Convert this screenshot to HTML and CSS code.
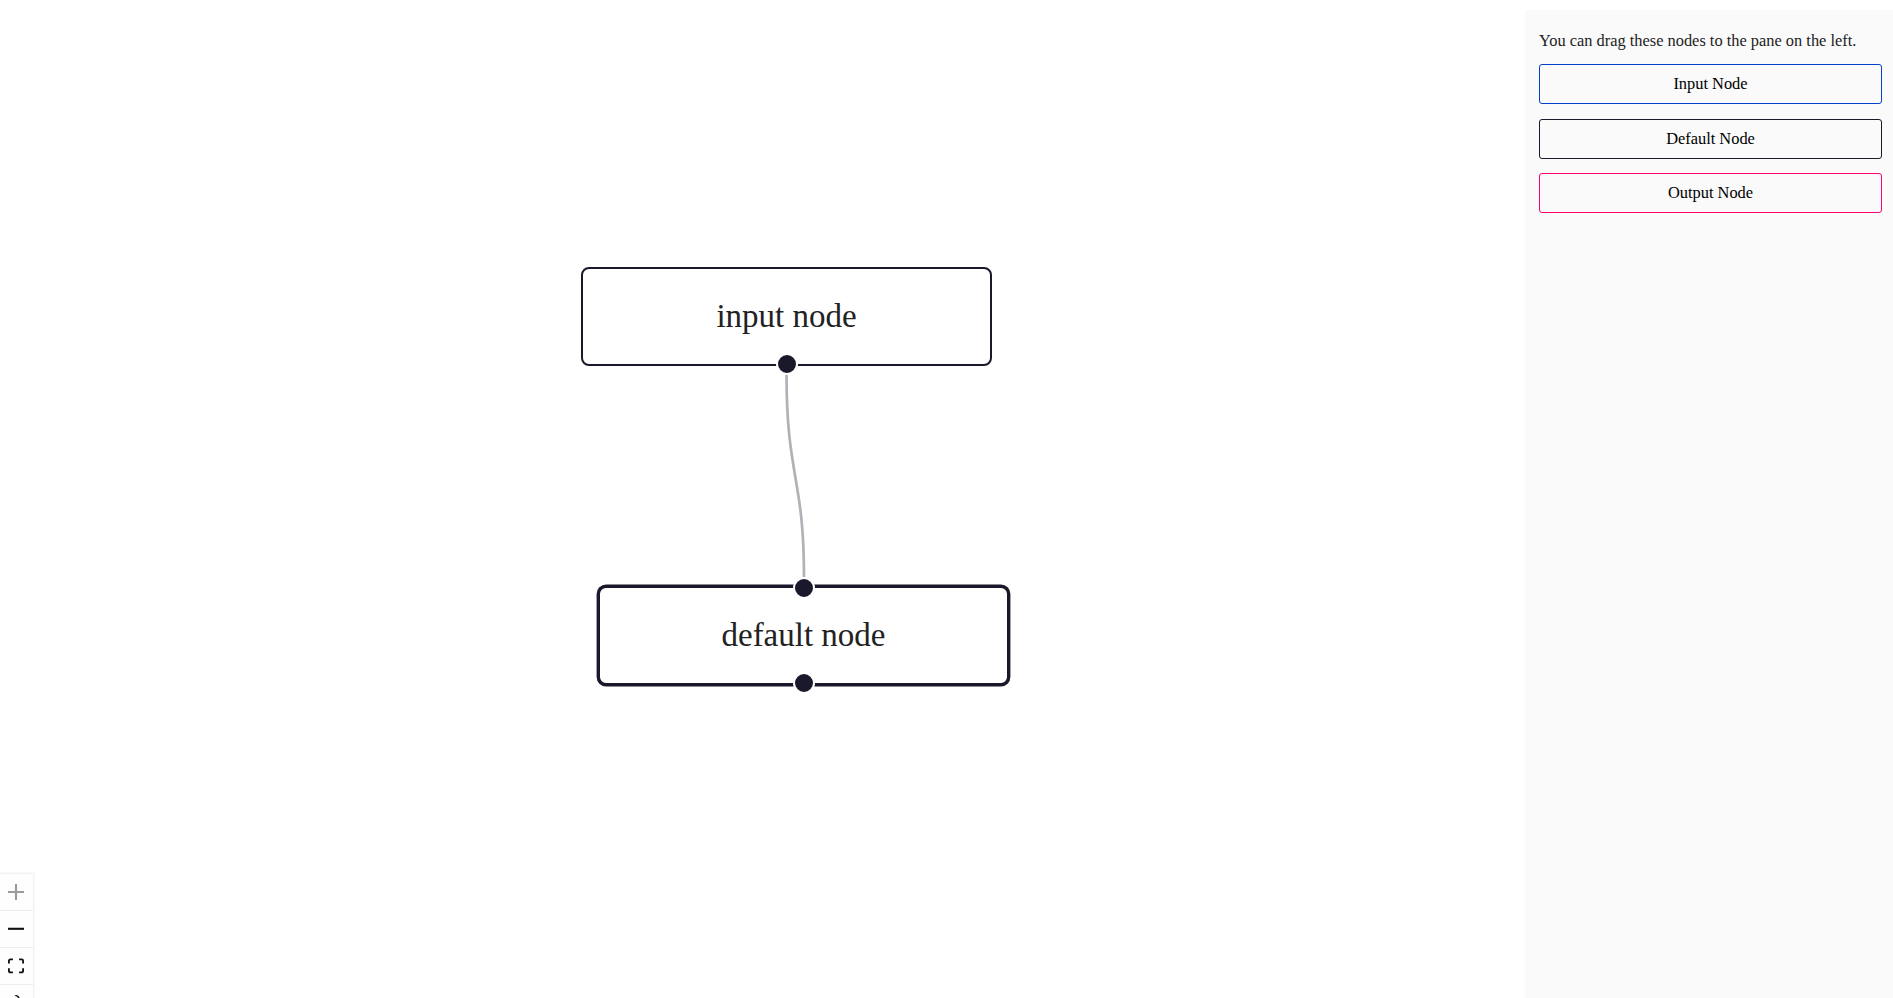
FILE: index.html
```html
<!DOCTYPE html>
<html>
<head>
    <title>Drag and Drop</title>
    <link rel="stylesheet" href="styles.css">
</head>
<body>
    <div class="dndflow">
        <div class="flow-pane">
            <svg class="edges" width="100%" height="100%">
                <path class="edge-path" d="M786.5,374 C786.5,477 804,477 804,577"/>
            </svg>

            <div class="node node-input" style="left: 581px; top: 267px;">
                input node
                <span class="handle handle-bottom"></span>
            </div>

            <div class="node node-default selected" style="left: 598px; top: 585.5px;">
                <span class="handle handle-top"></span>
                default node
                <span class="handle handle-bottom"></span>
            </div>

            <div class="controls">
                <button class="control-btn disabled" title="zoom in">
                    <svg viewBox="0 0 32 32"><path d="M32 18.133H18.133V32h-4.266V18.133H0v-4.266h13.867V0h4.266v13.867H32z"/></svg>
                </button>
                <button class="control-btn" title="zoom out">
                    <svg viewBox="0 0 32 5"><path d="M0 0h32v4.2H0z"/></svg>
                </button>
                <button class="control-btn" title="fit view">
                    <svg viewBox="0 0 32 30"><path d="M3.692 4.63c0-.53.4-.938.939-.938h5.215V0H4.708C2.13 0 0 2.054 0 4.63v5.216h3.692V4.631zM27.354 0h-5.2v3.692h5.17c.53 0 .984.4.984.939v5.215H32V4.631A4.624 4.624 0 0027.354 0zm.954 24.83c0 .532-.4.94-.939.94h-5.215v3.768h5.215c2.577 0 4.631-2.13 4.631-4.707v-5.139h-3.692v5.139zm-23.677.94c-.531 0-.939-.4-.939-.94v-5.138H0v5.139c0 2.577 2.13 4.707 4.708 4.707h5.138V25.77H4.631z"/></svg>
                </button>
                <button class="control-btn" title="toggle interactivity">
                    <svg viewBox="0 0 25 32"><path d="M21.333 10.667H19.81V7.619C19.81 3.429 16.38 0 12.19 0c-4.114 1.828-1.37 2.133.305 2.438 1.676.305 4.42 2.59 4.42 5.181v3.048H3.047A3.056 3.056 0 000 13.714v15.238A3.056 3.056 0 003.048 32h18.285a3.056 3.056 0 003.048-3.048V13.714a3.056 3.056 0 00-3.048-3.047zM12.19 24.533a3.056 3.056 0 01-3.047-3.047 3.056 3.056 0 013.047-3.048 3.056 3.056 0 013.048 3.048 3.056 3.056 0 01-3.048 3.047z"/></svg>
                </button>
            </div>
        </div>

        <aside class="sidebar">
            <div class="description">You can drag these nodes to the pane on the left.</div>
            <div class="dndnode input" draggable="true">Input Node</div>
            <div class="dndnode" draggable="true">Default Node</div>
            <div class="dndnode output" draggable="true">Output Node</div>
        </aside>
    </div>
</body>
</html>
```

FILE: styles.css
```css
html, body {
    margin: 0;
    height: 100%;
    overflow: hidden;
    background: #ffffff;
    font-family: 'Liberation Serif', 'Times New Roman', serif;
    color: #222222;
}

.dndflow {
    display: flex;
    height: 100vh;
}

.flow-pane {
    flex: 1;
    position: relative;
    overflow: hidden;
}

.edges {
    position: absolute;
    left: 0;
    top: 0;
}

.edge-path {
    fill: none;
    stroke: #b1b1b7;
    stroke-width: 2.7px;
}

/* nodes sit on a free canvas, so they keep their coordinates */
.node {
    position: absolute;
    box-sizing: border-box;
    width: 411px;
    height: 99px;
    border: 2.7px solid #1a192b;
    border-radius: 8px;
    background: #ffffff;
    display: flex;
    align-items: center;
    justify-content: center;
    font-size: 33px;
    color: #222222;
}

.node.selected {
    box-shadow: 0 0 0 1.4px #1a192b;
}

.handle {
    position: absolute;
    left: 50%;
    width: 22px;
    height: 22px;
    box-sizing: border-box;
    border: 2.7px solid #ffffff;
    border-radius: 50%;
    background: #1a192b;
}

.handle-bottom {
    bottom: 0;
    transform: translate(-50%, 50%);
}

.handle-top {
    top: 0;
    transform: translate(-50%, -50%);
}

.controls {
    position: absolute;
    left: -2px;
    top: 874px;
    display: flex;
    flex-direction: column;
    box-shadow: 0 0 2px 1px rgba(0, 0, 0, 0.08);
}

.control-btn {
    width: 35px;
    height: 37px;
    padding: 0;
    border: none;
    border-bottom: 1px solid #eeeeee;
    background: #fefefe;
    display: flex;
    align-items: center;
    justify-content: center;
}

.control-btn svg {
    width: 16px;
    height: 16px;
    fill: #111111;
}

.control-btn.disabled svg {
    fill: #9a9a9a;
}

.sidebar {
    width: 368px;
    box-sizing: border-box;
    margin-top: 10px;
    padding: 21px 11px 0 14px;
    background: #fafafa;
    font-size: 16.4px;
}

.description {
    margin-bottom: 13px;
}

.dndnode {
    box-sizing: border-box;
    height: 40px;
    margin-bottom: 14.5px;
    border: 1.3px solid #1a192b;
    border-radius: 3px;
    display: flex;
    align-items: center;
    justify-content: center;
    color: #000000;
}

.dndnode.input {
    border-color: #0041d0;
}

.dndnode.output {
    border-color: #ff0072;
}
```
